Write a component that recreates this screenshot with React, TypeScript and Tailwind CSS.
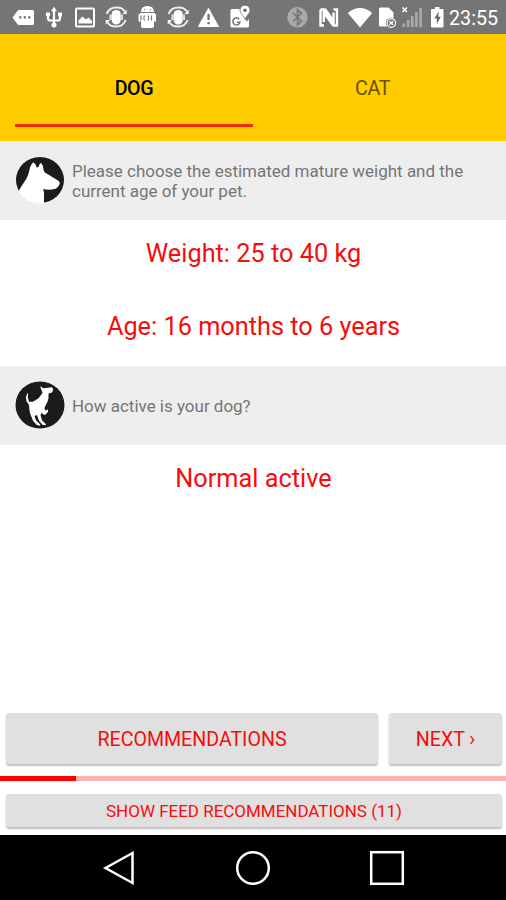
import type { ReactNode } from "react";

// Status glyphs are drawn in status-bar coordinates; x and w select the slot.
function Glyph({ x, w, children }: { x: number; w: number; children: ReactNode }) {
  return (
    <svg className="shrink-0" width={w} height={34} viewBox={`${x} 0 ${w} 34`} fill="#fff">
      {children}
    </svg>
  );
}

function SyncGlyph({ x }: { x: number }) {
  return (
    <Glyph x={x} w={31}>
      <g transform={`translate(${x + 15.2} 17)`}>
        <path d="M-9.500-3C-8-7-5-9.500 0-9.500S6.500-8.500 8.500-5.500M9.500 3C8 7 5 9.500 0 9.500S-6.500 8.500-8.500 5.500" fill="none" stroke="#eee" strokeWidth="2" />
        <path d="M10.500-7.500v4.500H6.200zM-10.500 7.500V3h4.300z" />
        <path d="M-4.500-3C-4.500-6-2.500-7 0-7s4.500 1 4.500 4v6C4.500 6 2 7.500 0 7.500S-4.500 6-4.500 3z" />
        <path d="M-6.800-2.500h2.500v5.500h-2.500zM4.300-2.500h2.500v5.500H4.300z" fill="#ddd" />
      </g>
    </Glyph>
  );
}

function StatusBar() {
  return (
    <header className="flex h-[34px] shrink-0 items-center bg-[#757575] pl-2 text-white">
      <Glyph x={8} w={31}>
        <path d="M19 10h13.500q1.500 0 1.500 1.500v12q0 1.500-1.500 1.500H19q-1 0-1.500-.8L12.500 17.500l5-6.700Q18 10 19 10z" />
        <path d="M19.200 16.300h2.200v2.200h-2.200zM23.700 16.300h2.200v2.200h-2.200zM28.200 16.300h2.200v2.200h-2.200z" fill="#707070" />
      </Glyph>
      <Glyph x={39} w={31}>
        <path d="M54 11v13M48 15v3.500q0 2 2 2h8q2 0 2-2V15" fill="none" stroke="#fff" strokeWidth="2.200" />
        <path d="M54 6.800l3 4.400h-6zM58 12.500h4v4h-4z" />
        <circle cx="48" cy="14.500" r="2.200" />
        <circle cx="54" cy="25" r="2.500" />
      </Glyph>
      <Glyph x={70} w={31}>
        <rect x="76" y="8.500" width="18" height="18" rx="1" fill="none" stroke="#fff" strokeWidth="2" />
        <path d="M78.500 23.500v-3l4-4 3.500 3 2.500-2 3.500 3.500v2.500z" />
      </Glyph>
      <SyncGlyph x={101} />
      <Glyph x={132} w={31}>
        <path d="M141 12q0-6 6.500-6t6.500 6zM140 13h15v3h-15zM141 21h13v5q0 2-2 2h-9q-2 0-2-2z" />
        <path d="M138.500 14h17.500v7.500h-17.500z" />
        <path d="M141 15.500v5M144.500 15.500q-1.500 2.500 0 5M148 15.500q1.500 2.500 0 5M151.500 15.500v5" fill="none" stroke="#777" strokeWidth="1.200" />
        <path d="M144 9h1.300v1.300H144zM149.700 9h1.300v1.300h-1.300z" fill="#999" />
      </Glyph>
      <SyncGlyph x={163} />
      <Glyph x={194} w={31}>
        <path d="M208.500 7.500L219.200 27h-21.500z" />
        <path d="M207.400 14h2.300v6h-2.300zM207.400 22h2.300v2.300h-2.300z" fill="#707070" />
      </Glyph>
      <Glyph x={225} w={31}>
        <path d="M232 9h11q-2 5 4 12.500l2-2.500v7q0 1.500-1.500 1.500H232q-1.500 0-1.500-1.500V10.500Q230.500 9 232 9z" />
        <path d="M239.300 19.200a3.600 3.600 0 1 0 .7 3h-3" fill="none" stroke="#707070" strokeWidth="1.500" />
        <path d="M245 5.200a5 5 0 0 1 5 5c0 3.500-4 5.300-5 9.300-1-4-5-5.800-5-9.300a5 5 0 0 1 5-5z" stroke="#757575" strokeWidth=".8" />
        <circle cx="245" cy="10.300" r="1.700" fill="#666" />
      </Glyph>
      <div className="ml-auto flex items-center">
        <Glyph x={284} w={29}>
          <circle cx="297.500" cy="17.300" r="10.200" fill="#a9a9a9" />
          <path d="M293 13l8.500 8.300-4 3.500V9.800l4 3.500L293 21.500" fill="none" stroke="#747474" strokeWidth="1.600" />
        </Glyph>
        <Glyph x={313} w={31}>
          <path d="M320.500 9.500h3.500l9.500 13V12.500M323.800 22V12.500l9.500 13h3.700v-16h-3.500M320.500 9.500v16h3.500" fill="none" stroke="#fff" strokeWidth="2.400" />
          <path d="M324 8.500h2l8 11V26h-1.500l-8.500-12z" />
        </Glyph>
        <Glyph x={344} w={31}>
          <path d="M347.800 13Q360 3 372.200 13L360 27.500z" />
        </Glyph>
        <Glyph x={375} w={24}>
          <path d="M380.500 7.500h8l5 5v14H380.500q-1.500 0-1.500-1.500V9q0-1.500 1.500-1.500z" />
          <circle cx="391.300" cy="23" r="5.600" fill="#757575" />
          <circle cx="391.300" cy="23" r="4.300" fill="none" stroke="#fff" strokeWidth="1.200" />
          <path d="M389.500 21.200l3.600 3.600M393.100 21.200l-3.600 3.600" stroke="#fff" strokeWidth="1.300" />
        </Glyph>
        <Glyph x={399} w={27}>
          <path d="M402.500 23.500h2.700V27h-2.700zM406.700 20h2.700v7h-2.700zM410.900 16h2.700v11h-2.700zM415.100 12h2.700v15h-2.700zM419.300 8h2.700v19h-2.700z" fill="#a9a9a9" />
          <path d="M402.500 7.500l4.500 4.500M407 7.500l-4.500 4.500" stroke="#fff" strokeWidth="1.500" />
        </Glyph>
        <Glyph x={426} w={23}>
          <path d="M435 7h4.500v2h3q1 0 1 1v16.500q0 1-1 1h-10.500q-1 0-1-1V10q0-1 1-1h3z" />
          <path d="M438.800 11.500l-4.500 7h2.500v5.500l4-7.300h-2.500z" fill="#666" />
        </Glyph>
        <time className="w-[57px] pt-[4px] text-[19.700px] leading-none whitespace-nowrap">23:55</time>
      </div>
    </header>
  );
}

function DogHead() {
  return (
    <svg className="mb-[1px] shrink-0" width="50" height="48" viewBox="0 0 50 50" preserveAspectRatio="none">
      <defs>
        <clipPath id="head-clip"><circle cx="25" cy="25" r="24.500" /></clipPath>
      </defs>
      <circle cx="25" cy="25" r="24" fill="#1b1b1b" />
      <path clipPath="url(#head-clip)" fill="#fff" d="M2 40C5 33 9 28 11.500 23.500C13.500 19 14.500 15 15 12Q16 8 18.500 6.500Q21 8.500 21.500 12L23.500 11.500Q24 8.500 26 7Q28.500 10 28.500 14L29.500 17L34.500 20L43 25.500Q45.500 27 44.500 29.500Q43 33.500 39.500 34.500Q34 36 28 34.500Q29.500 38 29 41L29 51H0z" />
    </svg>
  );
}

function RunningDog() {
  return (
    <svg className="mb-[1px] shrink-0" width="50" height="48" viewBox="0 0 50 50" preserveAspectRatio="none">
      <circle cx="25" cy="25" r="24.500" fill="#1b1b1b" />
      <path fill="#fff" d="M25 5.500L28.500 7.500L37 6.500L38.200 9L37 12L33.500 13L33.500 18Q33 22 30 26.500L29.500 29L31 31L32.800 29.500L33.200 32L30 35.500L27.500 34.500L27 32.500L25.500 35.500L27 41L31 45L30.500 46L27.500 45.500L24 41.500L22 35.500L19.500 36.500L21 41L25.500 45.500L24.500 46.500L21.500 45.500L18 41.500L15.500 35L14.500 31L14 25L11.500 21L10.800 17L12.500 12.500L13.200 13.500L12.800 17L14 21.500L18 21.500L23.500 18L27.500 12.500L26.500 9.500z" />
    </svg>
  );
}

function Question({ icon, children }: { icon: ReactNode; children: ReactNode }) {
  return (
    <div className="flex h-[79px] shrink-0 items-center bg-[#eee] pl-[15px] text-[16.980px] leading-[20px] text-[#757575]">
      {icon}
      <p className="ml-[7px] w-[410px]">{children}</p>
    </div>
  );
}

const choice = "flex h-[73px] w-full items-center justify-center pb-[6px] pl-[1px] text-[25.300px] text-[#f70c0c]";
const action = "flex items-center justify-center rounded-[3px] bg-[#e0e0e0] text-[#f70c0c] shadow-[0_2px_2px_rgba(0,0,0,0.25)]";

export default function App() {
  return (
    <div className="flex h-[900px] w-[506px] flex-col overflow-hidden bg-white font-[Roboto,sans-serif]">
      <StatusBar />
      <nav className="flex h-[107px] shrink-0 bg-[#fc0] px-[15px] text-[19.700px] tracking-[-0.4px]">
        <button className="flex h-[93px] w-[239px] items-center justify-center border-b-[3px] border-[#f62c08] pt-[20px] font-medium text-black">DOG</button>
        <button className="flex h-[93px] w-[239px] items-center justify-center pt-[17px] pl-[1px] text-[#665200]">CAT</button>
      </nav>
      <Question icon={<DogHead />}>Please choose the estimated mature weight and the current age of your pet.</Question>
      <main className="flex flex-1 flex-col">
        <button className={choice}>Weight: 25 to 40 kg</button>
        <button className={choice}>Age: 16 months to 6 years</button>
        <Question icon={<RunningDog />}>How active is your dog?</Question>
        <button className={choice}>Normal active</button>
      </main>
      <div className="flex h-[63px] shrink-0 gap-[11px] pl-[6px]">
        <button className={`${action} h-[51px] w-[372px] pt-[2px] text-[19.600px]`}>RECOMMENDATIONS</button>
        <button className={`${action} h-[51px] w-[113px] pt-[2px] text-[19.600px]`}>NEXT ›</button>
      </div>
      <div className="h-[5px] shrink-0 bg-[#ffb4b4]">
        <div className="h-full w-[76px] bg-[#f00]" />
      </div>
      <div className="flex h-[54px] shrink-0 pt-[13px] pl-[6px]">
        <button className={`${action} h-[33px] w-[496px] pt-[2px] text-[16.980px]`}>SHOW FEED RECOMMENDATIONS (11)</button>
      </div>
      <footer className="flex h-[65px] shrink-0 items-center justify-center gap-[96px] bg-black">
        <svg width="38" height="38" viewBox="0 0 38 38" fill="none" stroke="#fff" strokeWidth="2.500">
          <path d="M5.500 19L32.500 4v30z" />
        </svg>
        <svg width="38" height="38" viewBox="0 0 38 38" fill="none" stroke="#fff" strokeWidth="2.500">
          <circle cx="19" cy="19" r="15.800" />
        </svg>
        <svg width="38" height="38" viewBox="0 0 38 38" fill="none" stroke="#fff" strokeWidth="2.500">
          <rect x="3.200" y="3.200" width="31.600" height="31.600" />
        </svg>
      </footer>
    </div>
  );
}
